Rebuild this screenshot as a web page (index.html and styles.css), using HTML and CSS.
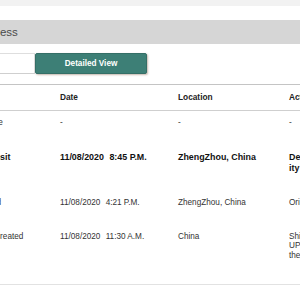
FILE: index.html
```html
<!DOCTYPE html>
<html lang="en">
<head>
	<meta charset="UTF-8">
	<title>Shipment Progress</title>
	<link rel="stylesheet" href="styles.css">
</head>
<body>
<div class="top-strip"></div>
<div class="page">
	<div class="bar">Shipment Progress</div>

	<div class="toggle">
		<button class="tab">List View</button>
		<button class="tab active">Detailed View</button>
	</div>

	<table class="track">
		<colgroup>
			<col class="c-status">
			<col class="c-date">
			<col class="c-loc">
			<col class="c-act">
		</colgroup>
		<thead>
		<tr>
			<th>Status</th>
			<th>Date</th>
			<th>Location</th>
			<th>Activity</th>
		</tr>
		</thead>
		<tbody>
		<tr>
			<td>Estimate</td>
			<td>-</td>
			<td>-</td>
			<td>-</td>
		</tr>
		<tr class="current">
			<td>In Transit</td>
			<td class="date">11/08/2020 <span class="time">8:45 P.M.</span></td>
			<td>ZhengZhou, China</td>
			<td class="act">Departed from Facil&shy;ity</td>
		</tr>
		<tr>
			<td>Shipped</td>
			<td class="date">11/08/2020 <span class="time">4:21 P.M.</span></td>
			<td>ZhengZhou, China</td>
			<td class="act">Origin Scan</td>
		</tr>
		<tr>
			<td>Order Created</td>
			<td class="date">11/08/2020 <span class="time">11:30 A.M.</span></td>
			<td>China</td>
			<td class="act">Shipper created a label, UPS has not received the package yet.</td>
		</tr>
		</tbody>
	</table>
</div>
</body>
</html>
```

FILE: styles.css
```css
* {
	margin: 0;
	padding: 0;
	box-sizing: border-box;
}

body {
	font-family: "Liberation Sans", Arial, sans-serif;
	background-color: #fff;
	color: #333;
	overflow: hidden;
}

.top-strip {
	height: 6px;
	background-color: #f2f2f2;
}

.page {
	margin-top: 14px;
	margin-left: -90px;
	width: 560px;
}

.bar {
	height: 24px;
	line-height: 25px;
	padding-left: 10px;
	font-size: 11.5px;
	color: #4a4a4a;
	background-color: #d6d6d6;
}

.toggle {
	display: flex;
	margin: 9px 0 0 13px;
}
.tab {
	width: 112px;
	height: 21px;
	font-family: inherit;
	font-size: 8.2px;
	font-weight: bold;
	color: #3d7f76;
	background-color: #fff;
	border: 1px solid #dedede;
	border-bottom-color: #cfcfcf;
}
.tab.active {
	color: #fff;
	background-color: #3d7f76;
	border: 1px solid #356f67;
	border-radius: 2px;
	box-shadow: 1px 1px 2px rgba(90, 50, 20, 0.35);
}

.track {
	margin-top: 10px;
	margin-left: 53px;
	width: 426px;
	table-layout: fixed;
	border-collapse: collapse;
	border-top: 1px solid #c4c4c4;
	border-bottom: 1px solid #e2e2e2;
}
.c-status { width: 87px; }
.c-date { width: 118px; }
.c-loc { width: 111px; }
.c-act { width: 110px; }

.track th {
	padding: 7px 10px 8px;
	font-size: 8.3px;
	line-height: 10px;
	font-weight: bold;
	color: #222;
	text-align: left;
	border-bottom: 1px solid #cfcfcf;
}
.track td {
	padding: 7px 10px 17px;
	font-size: 8.2px;
	line-height: 9.8px;
	vertical-align: top;
	color: #333;
}
.track td:first-child {
	padding-left: 8px;
}
.track tr.current td {
	font-size: 8.9px;
	line-height: 11px;
	font-weight: bold;
	color: #111;
}
.track tbody tr:last-child td {
	padding-bottom: 23px;
}
.date {
	white-space: nowrap;
}
.time {
	margin-left: 3px;
}
.act {
	hyphens: manual;
}
```
